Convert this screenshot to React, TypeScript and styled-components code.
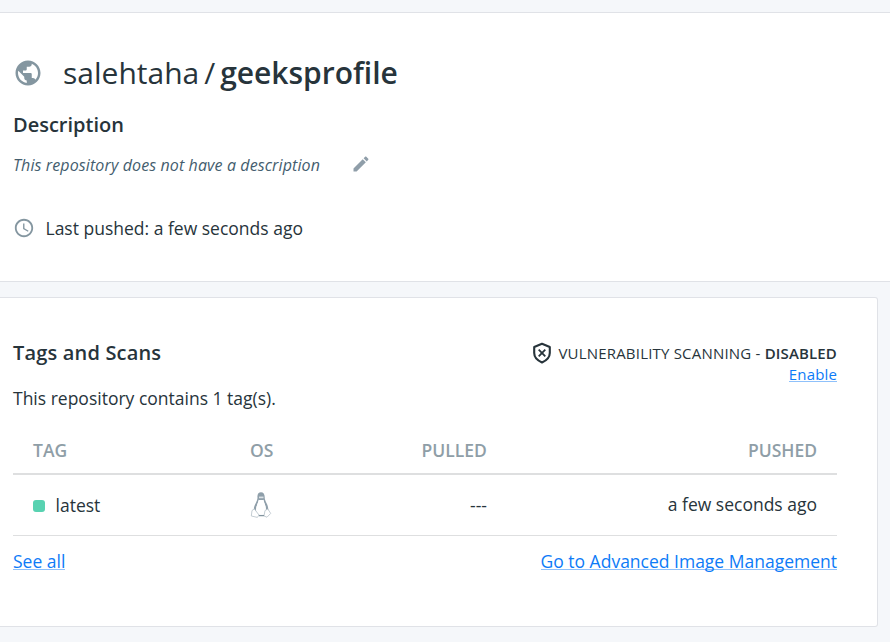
import React from "react";
import styled, { createGlobalStyle } from "styled-components";

const GlobalStyle = createGlobalStyle`
  * { box-sizing: border-box; }
  body {
    margin: 0;
    background: #f5f7fa;
    color: #27343b;
    font-family: "Open Sans", "Noto Sans", sans-serif;
    font-size: 17.5px;
    overflow: hidden;
  }
`;

const Page = styled.main`
  display: flex;
  flex-direction: column;
  height: 642px;
  padding-top: 12px;
`;

const Summary = styled.section`
  height: 270px;
  padding: 40px 13px 0;
  background: #fff;
  border-top: 1px solid #e0e2e7;
  border-bottom: 1px solid #e0e2e7;
`;

const Title = styled.h1`
  display: flex;
  align-items: center;
  height: 40px;
  margin: 0;
  font-size: 30px;
  line-height: 40px;
  font-weight: 400;
`;

const TitleIcon = styled.svg`
  width: 30px;
  height: 30px;
  margin-right: 20px;
  fill: #8496a0;
`;

const Slash = styled.span`
  margin: 0 5px;
`;

const RepoName = styled.strong`
  font-weight: 600;
  letter-spacing: -0.02px;
`;

const Heading = styled.h2`
  margin: 0;
  font-size: 20px;
  line-height: 30px;
  font-weight: 600;
`;

const SummaryHeading = styled(Heading)`
  margin-top: 17px;
`;

const CardHeading = styled(Heading)`
  letter-spacing: 0.17px;
`;

const Description = styled.div`
  display: flex;
  align-items: center;
  height: 30px;
  margin-top: 10px;
  color: #445d6e;
  font-size: 16px;
  font-style: italic;
  letter-spacing: 0.11px;
`;

const EditIcon = styled.svg`
  width: 20px;
  height: 20px;
  margin: -2px 0 0 31px;
  fill: #8f9ea9;
`;

const Pushed = styled.div`
  display: flex;
  align-items: center;
  height: 30px;
  margin-top: 33px;
`;

const ClockIcon = styled.svg`
  width: 22px;
  height: 22px;
  margin-right: 10.5px;
  fill: #8496a0;
`;

const Card = styled.section`
  width: 878px;
  height: 330px;
  margin-top: 15px;
  padding: 40px 40px 0 13px;
  background: #fff;
  border: 1px solid #e0e2e7;
  border-left: 0;
  border-radius: 0 3px 3px 0;
`;

const CardTop = styled.header`
  display: flex;
  justify-content: space-between;
  height: 47px;
`;

const Scanning = styled.div`
  display: flex;
  flex-direction: column;
  align-items: flex-end;
  padding-top: 5px;
  font-size: 15px;
  line-height: 21px;
`;

const Status = styled.div`
  display: flex;
  align-items: center;
  height: 21px;
  letter-spacing: 0.2px;
  white-space: pre;

  strong {
    font-weight: 600;
    letter-spacing: 0.15px;
  }
`;

const ShieldIcon = styled.svg`
  width: 20px;
  height: 22px;
  margin: -2px 6px 0 0;
  fill: none;
  stroke: #27343b;
`;

const Link = styled.a`
  height: 19px;
  color: #0d7bf7;
  line-height: 20px;
  text-decoration: none;
  border-bottom: 1px solid #8fc1fb;
`;

const EnableLink = styled(Link)`
  height: 18px;
  line-height: 20px;
  letter-spacing: 0.15px;
`;

const Count = styled.p`
  height: 26px;
  margin: 0;
  line-height: 26px;
`;

const HeadRow = styled.div`
  display: grid;
  grid-template-columns: 217px 171.5px 1fr auto;
  align-items: center;
  height: 64px;
  padding: 15px 20px 0;
  border-bottom: 2px solid #dedfe0;
  color: #8f9ea7;
  font-weight: 600;
`;

const Row = styled(HeadRow)`
  height: 61px;
  padding: 0 20px;
  border-bottom-width: 1px;
  color: inherit;
  font-weight: 400;
`;

const TagName = styled.span`
  display: flex;
  align-items: center;
  gap: 10.5px;

  &::before {
    content: "";
    width: 12px;
    height: 12px;
    margin-top: 2px;
    border-radius: 3px;
    background: #58d2b1;
  }
`;

const Pulled = styled.span`
  padding-left: 48.5px;
`;

const PushedAt = styled.span`
  padding-bottom: 2px;
`;

const LinuxIcon = styled.svg`
  width: 22px;
  height: 28px;
`;

const CardLinks = styled.footer`
  display: flex;
  justify-content: space-between;
  padding-top: 15px;
`;

export default function App() {
  return (
    <Page>
      <GlobalStyle />
      <Summary>
        <Title>
          <TitleIcon viewBox="0 0 24 24">
            <path d="M12 2C6.48 2 2 6.48 2 12s4.48 10 10 10 10-4.48 10-10S17.52 2 12 2zm-1 17.93c-3.95-.49-7-3.85-7-7.93 0-.62.08-1.21.21-1.79L9 15v1c0 1.1.9 2 2 2v1.93zm6.9-2.54c-.26-.81-1-1.39-1.9-1.39h-1v-3c0-.55-.45-1-1-1H8v-2h2c.55 0 1-.45 1-1V7h2c1.1 0 2-.9 2-2v-.41c2.93 1.19 5 4.06 5 7.41 0 2.08-.8 3.97-2.1 5.39z" />
          </TitleIcon>
          <span>salehtaha</span>
          <Slash>/</Slash>
          <RepoName>geeksprofile</RepoName>
        </Title>
        <SummaryHeading>Description</SummaryHeading>
        <Description>
          <span>This repository does not have a description</span>
          <EditIcon viewBox="0 0 24 24">
            <path d="M3 17.25V21h3.75L17.81 9.94l-3.75-3.75L3 17.25zM20.71 7.04c.39-.39.39-1.02 0-1.41l-2.34-2.34c-.39-.39-1.02-.39-1.41 0l-1.83 1.83 3.75 3.75 1.83-1.83z" />
          </EditIcon>
        </Description>
        <Pushed>
          <ClockIcon viewBox="0 0 24 24">
            <path d="M11.99 2C6.47 2 2 6.48 2 12s4.47 10 9.99 10C17.52 22 22 17.52 22 12S17.52 2 11.99 2zM12 20c-4.42 0-8-3.58-8-8s3.58-8 8-8 8 3.58 8 8-3.58 8-8 8zm.5-13H11v6l5.25 3.15.75-1.23-4.5-2.67z" />
          </ClockIcon>
          <span>Last pushed: a few seconds ago</span>
        </Pushed>
      </Summary>
      <Card>
        <CardTop>
          <CardHeading>Tags and Scans</CardHeading>
          <Scanning>
            <Status>
              <ShieldIcon viewBox="0 0 20 22">
                <path d="M10 1.7 L2.2 5 V11 C2.2 15.5 4.5 18 10 20.5 C15.5 18 17.8 15.5 17.8 11 V5 Z" strokeWidth="2.1" strokeLinejoin="round" />
                <path d="M6.7 7.7l6.6 6.6M13.3 7.7l-6.6 6.6" strokeWidth="1.8" />
              </ShieldIcon>
              VULNERABILITY SCANNING - <strong>DISABLED</strong>
            </Status>
            <EnableLink>Enable</EnableLink>
          </Scanning>
        </CardTop>
        <Count>This repository contains 1 tag(s).</Count>
        <HeadRow>
          <span>TAG</span>
          <span>OS</span>
          <span>PULLED</span>
          <span>PUSHED</span>
        </HeadRow>
        <Row>
          <TagName>latest</TagName>
          <LinuxIcon viewBox="0 0 22 28" fill="none">
            <path d="M7.5 7 C7 3 8.5 1.2 11 1.2 C13.5 1.2 15 3.5 14.7 7 C15 11 19 14 18.2 20 L15 22 C17 16 14 12 13.4 9 H9 C8 13 5 16 6.4 21 L4 19 C3 15 7.4 11 7.5 7Z" fill="#8f9faa" />
            <path d="M8.7 8.8 L11 10 13.4 8.7 C14 13 17 15 15.6 21 C14 24 8.5 24 7 21 C5 17 8 13 8.7 8.8Z" fill="#fff" />
            <path d="M9 6.4h4.5" stroke="#dce2e6" strokeWidth="1.7" />
            <path d="M4.4 18 L2 19.5 1.3 25 7.4 26.4 9 24Z M17.8 18 L20.7 22.4 17 26.2 14 25 15 19.5Z" fill="#fff" stroke="#b5c0c8" strokeWidth=".8" />
            <path d="M9 24.6h5" stroke="#82949f" strokeWidth="1.3" />
          </LinuxIcon>
          <Pulled>---</Pulled>
          <PushedAt>a few seconds ago</PushedAt>
        </Row>
        <CardLinks>
          <Link>See all</Link>
          <Link>Go to Advanced Image Management</Link>
        </CardLinks>
      </Card>
    </Page>
  );
}
